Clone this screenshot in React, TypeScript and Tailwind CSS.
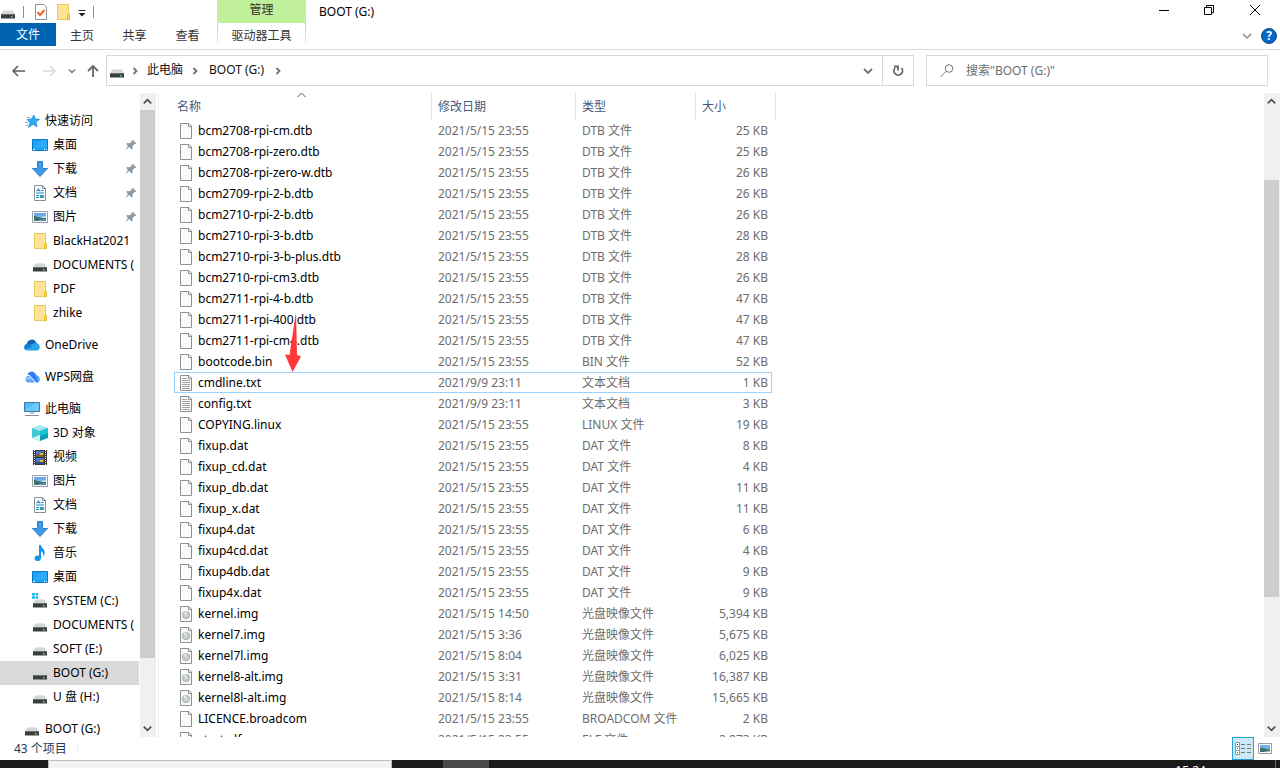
import type { ReactNode } from "react"

type FileKind = "blank" | "text" | "image"
type FileRow = [name: string, date: string, type: string, size: string, kind: FileKind]

const files: FileRow[] = [
  ["bcm2708-rpi-cm.dtb", "2021/5/15 23:55", "DTB 文件", "25 KB", "blank"],
  ["bcm2708-rpi-zero.dtb", "2021/5/15 23:55", "DTB 文件", "25 KB", "blank"],
  ["bcm2708-rpi-zero-w.dtb", "2021/5/15 23:55", "DTB 文件", "26 KB", "blank"],
  ["bcm2709-rpi-2-b.dtb", "2021/5/15 23:55", "DTB 文件", "26 KB", "blank"],
  ["bcm2710-rpi-2-b.dtb", "2021/5/15 23:55", "DTB 文件", "26 KB", "blank"],
  ["bcm2710-rpi-3-b.dtb", "2021/5/15 23:55", "DTB 文件", "28 KB", "blank"],
  ["bcm2710-rpi-3-b-plus.dtb", "2021/5/15 23:55", "DTB 文件", "28 KB", "blank"],
  ["bcm2710-rpi-cm3.dtb", "2021/5/15 23:55", "DTB 文件", "26 KB", "blank"],
  ["bcm2711-rpi-4-b.dtb", "2021/5/15 23:55", "DTB 文件", "47 KB", "blank"],
  ["bcm2711-rpi-400.dtb", "2021/5/15 23:55", "DTB 文件", "47 KB", "blank"],
  ["bcm2711-rpi-cm4.dtb", "2021/5/15 23:55", "DTB 文件", "47 KB", "blank"],
  ["bootcode.bin", "2021/5/15 23:55", "BIN 文件", "52 KB", "blank"],
  ["cmdline.txt", "2021/9/9 23:11", "文本文档", "1 KB", "text"],
  ["config.txt", "2021/9/9 23:11", "文本文档", "3 KB", "text"],
  ["COPYING.linux", "2021/5/15 23:55", "LINUX 文件", "19 KB", "blank"],
  ["fixup.dat", "2021/5/15 23:55", "DAT 文件", "8 KB", "blank"],
  ["fixup_cd.dat", "2021/5/15 23:55", "DAT 文件", "4 KB", "blank"],
  ["fixup_db.dat", "2021/5/15 23:55", "DAT 文件", "11 KB", "blank"],
  ["fixup_x.dat", "2021/5/15 23:55", "DAT 文件", "11 KB", "blank"],
  ["fixup4.dat", "2021/5/15 23:55", "DAT 文件", "6 KB", "blank"],
  ["fixup4cd.dat", "2021/5/15 23:55", "DAT 文件", "4 KB", "blank"],
  ["fixup4db.dat", "2021/5/15 23:55", "DAT 文件", "9 KB", "blank"],
  ["fixup4x.dat", "2021/5/15 23:55", "DAT 文件", "9 KB", "blank"],
  ["kernel.img", "2021/5/15 14:50", "光盘映像文件", "5,394 KB", "image"],
  ["kernel7.img", "2021/5/15 3:36", "光盘映像文件", "5,675 KB", "image"],
  ["kernel7l.img", "2021/5/15 8:04", "光盘映像文件", "6,025 KB", "image"],
  ["kernel8-alt.img", "2021/5/15 3:31", "光盘映像文件", "16,387 KB", "image"],
  ["kernel8l-alt.img", "2021/5/15 8:14", "光盘映像文件", "15,665 KB", "image"],
  ["LICENCE.broadcom", "2021/5/15 23:55", "BROADCOM 文件", "2 KB", "blank"],
  ["start.elf", "2021/5/15 23:55", "ELF 文件", "2,873 KB", "blank"],
]

function Svg({ children, className = "size-4" }: { children: ReactNode; className?: string }) {
  return (
    <svg viewBox="0 0 16 16" className={`shrink-0 ${className}`} fill="none" aria-hidden="true">
      {children}
    </svg>
  )
}

function DriveIcon({ system = false }: { system?: boolean }) {
  return (
    <Svg>
      {system && <path d="M0 0h3v2.500H0zM3.700 0H6v2.500H3.700zM0 3.200h3v2.500H0zM3.700 3.200H6v2.500H3.700z" fill="#19b5f0" />}
      <path d="M3.300 6.500h9.400L15 10.500H1z" fill="#d4d6d8" />
      <path d="M1 10h14v4.500H1z" fill="#3b3d3f" />
      <path d="M1 10h14v1H1z" fill="#6c6f72" />
      <path d="M11 12h1.500v1.500H11z" fill="#4be25c" />
    </Svg>
  )
}

function FolderIcon() {
  return (
    <Svg>
      <path d="M2.500.5h11v11h1v4h-12z" fill="#ffe394" stroke="#ecc95b" />
      <path d="M12.500 11v4.500h2V10z" fill="#ffd766" stroke="#e5b93c" />
    </Svg>
  )
}

function DesktopIcon() {
  return (
    <Svg>
      <path d="M.5 2.500h15v11H.5z" fill="#1ba1f5" stroke="#0877c4" />
      <path d="M1 9 10 3h5v8H1z" fill="#35b1ff" opacity=".5" />
      <path d="M1 12.500h2m9 0h1m1 0h1" stroke="#fff" />
    </Svg>
  )
}

function DownloadIcon() {
  return (
    <Svg>
      <path d="M5.500 .5h5v7h5L8 15.500.5 7.500h5z" fill="#3d9ae8" stroke="#2a7fcf" />
    </Svg>
  )
}

function DocumentIcon() {
  return (
    <Svg>
      <path d="M2.500.5h8l3 3v12h-11z" fill="#fff" stroke="#8b8f92" />
      <path d="M10.500.5v3h3" stroke="#8b8f92" />
      <path d="m4.500 6.500 2-3 1 3M5 5.500h2.500M8.500 5.500h3M4 8h8M4 10.500h3M4 12.500h3" stroke="#2088c9" />
      <path d="M8 10h4v3H8z" fill="#3c9bb0" />
    </Svg>
  )
}

function PictureIcon() {
  return (
    <Svg>
      <path d="M.5 2.500h15v11H.5z" fill="#fff" stroke="#999da0" />
      <path d="M2 4h12v4H2z" fill="#6aa9e8" />
      <path d="M2 7.500 9 8l5-1v2H2z" fill="#c5e2f2" />
      <path d="M2 7c3 0 5 2 12 2v3H2z" fill="#3f7065" />
      <path d="M5 12c3-2 6-2 9-2v2z" fill="#5b8cb8" />
    </Svg>
  )
}

function StarIcon() {
  return (
    <Svg>
      <path d="m10 2 1 4 4.500.3L12 9l1 5-4-2.700L4.500 14.500 6 9.500 3 6.500l4.500-.5z" fill="#2fa9ee" stroke="#1585cf" strokeWidth=".7" />
      <path d="M3 4.500h3M1 9.500h3M2 12.500h2" stroke="#5cbaf0" />
    </Svg>
  )
}

function OneDriveIcon() {
  return (
    <Svg>
      <path d="M3 6a5 5 0 0 1 9-1l1 2-7 4-4-1z" fill="#0a62b5" />
      <path d="M3.500 6.500a4 4 0 0 0-2.300 6.600L9 8.500 5.500 6.400z" fill="#127bd1" />
      <path d="M6 8.500 10.500 6a4 4 0 0 1 5 3c1 2-.5 4.500-2.500 4.500H3.500a3.500 3.500 0 0 1-2.400-1L8 9.500z" fill="#29a3ea" />
    </Svg>
  )
}

function WpsCloudIcon() {
  return (
    <Svg>
      <path d="M3.500 5.500C5 1.500 10 1.500 11.500 5l3.500 7c-.7 1-1.500 1.500-3 1.500L5.500 6.200z" fill="#2f7df5" />
      <path d="M11.500 6c3 0 5 3 4 6l-1.500 1.500z" fill="#55a5fb" />
      <path d="M4.500 7c2 0 3 1.500 5 4.500l1.300 2H4a3.300 3.300 0 0 1 .5-6.500z" fill="#5aa6fc" />
      <path d="m5 6 6.500 7.500M1 10.500c2-2 4-2 6 0" stroke="#fff" strokeWidth=".8" />
    </Svg>
  )
}

function ComputerIcon() {
  return (
    <Svg>
      <path d="M.5 1.500h15v9H.5z" fill="#55bdf5" stroke="#397b9f" />
      <path d="M1 10 11 2h4v8H1z" fill="#7bd2ff" opacity=".6" />
      <path d="M6 12h4M1 14.500h14" stroke="#82939d" />
    </Svg>
  )
}

function CubeIcon() {
  return (
    <Svg>
      <path d="m8 0 8 3-8 3-8-3z" fill="#a9e8ef" />
      <path d="m0 3 8 3v10l-8-3z" fill="#43c6d5" />
      <path d="m16 3-8 3v10l8-3z" fill="#0aa1b8" />
      <path d="m0 13 8-3v6z" fill="#d4f3f5" />
      <path d="m8 6 8-3v5l-8 3z" fill="#17c6d6" />
    </Svg>
  )
}

function VideoIcon() {
  return (
    <Svg>
      <path d="M1 1h14v15H1z" fill="#3a3a3a" />
      <path d="M2.500 1v15M13.500 1v15" stroke="#e9e9e9" strokeDasharray="1 1" />
      <path d="M4 2h8v6H4zM4 9h8v6H4z" fill="#4778d1" />
      <path d="M4 6h3l2-3 3 1v4H4z" fill="#5a6740" />
      <path d="M8 4h3v2H8zM8 11h3v2H8z" fill="#efb62e" />
      <path d="M5 5h2v2H5z" fill="#c63b2d" />
      <path d="M4 13h8v2H4z" fill="#2f4c84" />
    </Svg>
  )
}

function MusicIcon() {
  return (
    <Svg>
      <path d="M7 0h2c.3 3.500 4.800 4.500 3.500 9-.5 1.600-1 2-1.500 2.500.8-3-.2-4.500-2-5.200V13c0 4-6.500 4-6.500.5 0-2.500 2.500-3.500 4.500-2.800z" fill="#1197ec" />
    </Svg>
  )
}

function PinIcon() {
  return (
    <Svg className="size-3">
      <path d="m10 1 5.500 5-2 1-1-.2L10 9.500l.3 3.200-1.500 1.300-3.200-3.200L0 15.500 4 9.300 1.500 6.700 3 5.400l3.200.3 2.800-2.300L8.700 2z" fill="#8f9ca8" />
    </Svg>
  )
}

function FileIcon({ kind }: { kind: FileKind }) {
  return (
    <Svg>
      <path d="M2.500.5h8.500l2.500 2.500v12.500h-11z" fill="#f9faf9" stroke="#8f9191" />
      <path d="M10.500.5v3h3" stroke="#8f9191" />
      {kind === "text" && <path d="M4 3.500h5M4 5.500h8M4 7.500h8M4 9.500h8M4 11.500h8M4 13.500h8" stroke="#a2a4a4" />}
      {kind === "image" && (
        <>
          <circle cx="8" cy="9" r="3.700" fill="#c5cdd0" stroke="#a1a7aa" strokeWidth=".8" />
          <path d="M8 9 5.500 7a4 4 0 0 1 3-2z" fill="#e4eaec" />
          <circle cx="8" cy="9" r="1" fill="#dde3e5" />
        </>
      )}
    </Svg>
  )
}

function Chevron({ dir = "down", className }: { dir?: "down" | "up" | "right"; className?: string }) {
  const d = { down: "m4 6 4 4 4-4", up: "m4 10 4-4 4 4", right: "m6.500 5 3 3-3 3" }[dir]
  return (
    <Svg className={className}>
      <path d={d} stroke="currentColor" strokeWidth="1.800" />
    </Svg>
  )
}

type NavItem = { label: string; icon: ReactNode; root?: boolean; pinned?: boolean; active?: boolean }

const navGroups: NavItem[][] = [
  [
    { label: "快速访问", icon: <StarIcon />, root: true },
    { label: "桌面", icon: <DesktopIcon />, pinned: true },
    { label: "下载", icon: <DownloadIcon />, pinned: true },
    { label: "文档", icon: <DocumentIcon />, pinned: true },
    { label: "图片", icon: <PictureIcon />, pinned: true },
    { label: "BlackHat2021", icon: <FolderIcon /> },
    { label: "DOCUMENTS (", icon: <DriveIcon /> },
    { label: "PDF", icon: <FolderIcon /> },
    { label: "zhike", icon: <FolderIcon /> },
  ],
  [{ label: "OneDrive", icon: <OneDriveIcon />, root: true }],
  [{ label: "WPS网盘", icon: <WpsCloudIcon />, root: true }],
  [
    { label: "此电脑", icon: <ComputerIcon />, root: true },
    { label: "3D 对象", icon: <CubeIcon /> },
    { label: "视频", icon: <VideoIcon /> },
    { label: "图片", icon: <PictureIcon /> },
    { label: "文档", icon: <DocumentIcon /> },
    { label: "下载", icon: <DownloadIcon /> },
    { label: "音乐", icon: <MusicIcon /> },
    { label: "桌面", icon: <DesktopIcon /> },
    { label: "SYSTEM (C:)", icon: <DriveIcon system /> },
    { label: "DOCUMENTS (", icon: <DriveIcon /> },
    { label: "SOFT (E:)", icon: <DriveIcon /> },
    { label: "BOOT (G:)", icon: <DriveIcon />, active: true },
    { label: "U 盘 (H:)", icon: <DriveIcon /> },
  ],
  [{ label: "BOOT (G:)", icon: <DriveIcon />, root: true }],
]

function TitleBar() {
  return (
    <header className="flex h-[23px] shrink-0">
      <div className="flex w-[217px] items-center">
        <DriveIcon />
        <span className="ml-[7px] h-3 w-px bg-[#8d8d8d]" />
        <button className="ml-[9px]" aria-label="属性">
          <Svg>
            <path d="M2.500.5h8.500l2.500 2.500v12.500h-11z" fill="#fff" stroke="#8f9191" />
            <path d="m4.500 8 2.500 3 4.500-5" stroke="#ec6325" strokeWidth="2" />
          </Svg>
        </button>
        <button className="ml-1.5" aria-label="新建文件夹">
          <FolderIcon />
        </button>
        <button className="ml-[3px]" aria-label="自定义快速访问工具栏">
          <Svg>
            <path d="M4.500 6.500h7" stroke="#222" />
            <path d="M4.500 9h7L8 12.500z" fill="#222" />
          </Svg>
        </button>
        <span className="ml-[3px] h-3 w-px bg-[#8d8d8d]" />
      </div>
      <div className="w-[89px] bg-[#c1f09b] text-center leading-5 text-[#333]">管理</div>
      <h1 className="ml-[13px] leading-6">BOOT (G:)</h1>
      <div className="mr-0.5 ml-auto flex">
        <button className="flex w-[46px] justify-center pt-0.5" aria-label="最小化">
          <Svg>
            <path d="M4 8.500h10" stroke="#000" />
          </Svg>
        </button>
        <button className="flex w-[46px] justify-center pt-0.5" aria-label="向下还原">
          <Svg>
            <path d="M3.500 5.500h7v7h-7zM5.500 5.500v-2h7v7h-2" stroke="#000" />
          </Svg>
        </button>
        <button className="flex w-[46px] justify-center pt-0.5" aria-label="关闭">
          <Svg>
            <path d="m3 3 10 10M13 3 3 13" stroke="#000" />
          </Svg>
        </button>
      </div>
    </header>
  )
}

function Ribbon() {
  return (
    <nav className="flex h-[27px] shrink-0 items-start border-b border-[#d9d9d9] text-[#333]">
      <button className="h-[23px] w-14 bg-[#0063b1] pt-px text-white">文件</button>
      <button className="h-6 w-[52px] pt-px">主页</button>
      <button className="h-6 w-[53px] pt-px">共享</button>
      <button className="h-6 w-[53px] pt-px">查看</button>
      <div className="ml-[3px] flex w-[89px] justify-between">
        <span className="h-5 w-px bg-linear-to-b from-[#c8c8c8] to-[#ececec]" />
        <button className="h-6 pt-px">驱动器工具</button>
        <span className="h-5 w-px bg-linear-to-b from-[#c8c8c8] to-[#ececec]" />
      </div>
      <button className="mt-[5px] ml-auto text-[#a0a0a0]" aria-label="展开功能区">
        <Chevron className="size-4" />
      </button>
      <button className="mt-[5px] mr-[3px] ml-1.5" aria-label="帮助">
        <span className="flex size-4 items-center justify-center rounded-full border border-[#174c7c] bg-[#0068c8] font-bold text-white">
          ?
        </span>
      </button>
    </nav>
  )
}

function AddressBar() {
  return (
    <div className="flex h-[43px] shrink-0 items-start pt-[5px] pr-3 text-[#737373]">
      <div className="flex h-8 w-[106px] shrink-0 items-center pl-[11px]">
        <button aria-label="后退">
          <Svg>
            <path d="M14 8H2m5-5L2 8l5 5" stroke="#5d5d5d" strokeWidth="1.500" />
          </Svg>
        </button>
        <button className="ml-3.5" aria-label="前进" disabled>
          <Svg>
            <path d="M2 8h12M9 3l5 5-5 5" stroke="#dadada" strokeWidth="1.500" />
          </Svg>
        </button>
        <button className="ml-[9px]" aria-label="最近浏览的位置">
          <Chevron className="size-3" />
        </button>
        <button className="ml-[7px]" aria-label="向上">
          <Svg>
            <path d="M8 14V3M3 8l5-5 5 5" stroke="#666" strokeWidth="1.800" />
          </Svg>
        </button>
      </div>
      <div className="flex h-[31px] min-w-0 flex-1 items-center border border-[#d9d9d9]">
        <span className="ml-0.5">
          <DriveIcon />
        </span>
        <Chevron dir="right" className="ml-0.5 size-4" />
        <a href="#pc" className="ml-1 pb-px text-[#111]">
          此电脑
        </a>
        <Chevron dir="right" className="ml-1 size-4" />
        <a href="#boot" className="ml-1.5 pb-px text-[#111]">
          BOOT (G:)
        </a>
        <Chevron dir="right" className="ml-1.5 size-4" />
        <button className="mr-1.5 ml-auto" aria-label="以前的位置">
          <Chevron className="size-4" />
        </button>
        <button className="flex h-full w-[31px] items-center justify-center border-l border-[#d9d9d9]" aria-label="刷新">
          <Svg>
            <path d="M5 5a4.300 4.300 0 1 0 6.500 0M4 3.500h4V7.500" stroke="#666" strokeWidth="1.800" />
          </Svg>
        </button>
      </div>
      <label className="ml-3 flex h-[31px] w-[342px] items-center border border-[#d9d9d9] pl-3">
        <Svg>
          <circle cx="10" cy="5.500" r="3.800" stroke="#777" />
          <path d="M7 8.500 1.500 14" stroke="#777" />
        </Svg>
        <input
          aria-label="搜索"
          placeholder={'搜索"BOOT (G:)"'}
          className="ml-[11px] min-w-0 flex-1 bg-transparent outline-none placeholder:text-[#6d6d6d]"
        />
      </label>
    </div>
  )
}

function ScrollBar({ before, thumb, after }: { before: string; thumb: string; after: string }) {
  return (
    <div className="flex w-4 shrink-0 flex-col bg-[#f0f0f0] text-[#505050]">
      <button className="flex h-[17px] w-[15px] shrink-0 items-center justify-center" aria-label="向上滚动">
        <Chevron dir="up" className="size-[15px]" />
      </button>
      <div className={before} />
      <div className={`w-[15px] bg-[#cdcdcd] ${thumb}`} />
      <div className={after} />
      <button className="flex h-[17px] w-[15px] shrink-0 items-center justify-center" aria-label="向下滚动">
        <Chevron className="size-[15px]" />
      </button>
    </div>
  )
}

function Sidebar() {
  return (
    <aside className="flex w-[159px] shrink-0 border-r border-[#f0f0f0]">
      <nav className="flex w-[140px] flex-col gap-2 overflow-hidden pt-4 pr-px">
        {navGroups.map((group, i) => (
          <ul key={i}>
            {group.map((item, j) => (
              <li key={j}>
                <a
                  href="#"
                  className={`flex h-6 items-center gap-[5px] whitespace-nowrap ${item.root ? "pl-6" : "pl-8"} ${item.active ? "bg-[#d9d9d9]" : ""}`}
                >
                  {item.icon}
                  <span className="flex-1">{item.label}</span>
                  {item.pinned && (
                    <span className="mr-0.5">
                      <PinIcon />
                    </span>
                  )}
                </a>
              </li>
            ))}
          </ul>
        ))}
      </nav>
      <ScrollBar before="grow-0" thumb="grow-[548]" after="grow-[62]" />
    </aside>
  )
}

function FileTable() {
  return (
    <section className="relative min-w-0 flex-1 overflow-hidden pl-[15px]">
      <table className="w-[602px] table-fixed border-separate border-spacing-0">
        <colgroup>
          <col className="w-[258px]" />
          <col className="w-36" />
          <col className="w-[120px]" />
          <col className="w-[76px]" />
          <col className="w-1" />
        </colgroup>
        <thead>
          <tr className="h-[27px] text-left text-[#44597a] *:border-r *:border-[#e5e5e5] *:p-0 *:font-normal">
            <th>
              <span className="relative block pl-[3px]">
                名称
                <span className="absolute -top-2 left-[121px] text-[#555]">
                  <svg viewBox="0 0 12 12" className="size-3" fill="none" aria-hidden="true">
                    <path d="m2.500 6 4-4 4 4" stroke="currentColor" />
                  </svg>
                </span>
              </span>
            </th>
            <th>
              <span className="pl-1.5">修改日期</span>
            </th>
            <th>
              <span className="pl-1.5">类型</span>
            </th>
            <th colSpan={2}>
              <span className="pl-1.5">大小</span>
            </th>
          </tr>
        </thead>
        <tbody>
          {files.map(([name, date, type, size, kind]) => {
            const edge = name === "cmdline.txt" ? "border-[#99d1ff]" : "border-transparent"
            return (
              <tr key={name} className="h-[21px] text-[#6d6d6d]">
                <td className={`border-y border-l p-0 ${edge}`}>
                  <div className="flex items-center gap-1 pl-[3px] text-black">
                    <FileIcon kind={kind} />
                    {name}
                  </div>
                </td>
                <td className={`border-y p-0 pl-1.5 ${edge}`}>{date}</td>
                <td className={`border-y p-0 pl-1.5 ${edge}`}>{type}</td>
                <td className={`border-y border-r p-0 pr-[3px] text-right ${edge}`}>{size}</td>
                <td className="p-0" />
              </tr>
            )
          })}
        </tbody>
      </table>
      {/* Hand-drawn arrow pointing at cmdline.txt */}
      <svg viewBox="0 0 16 60" className="absolute top-[219px] left-[126px] h-[60px] w-4" aria-hidden="true">
        <path d="M11 0 12 43l4 1.500L7.500 60 0 42.500l4.500.5z" fill="#ff3838" />
      </svg>
    </section>
  )
}

function StatusBar() {
  return (
    <footer className="flex h-[23px] shrink-0 items-center pl-3.5 text-[#1e395b]">
      <span>43 个项目</span>
      <span className="ml-2.5 h-3 w-px bg-[#f0f0f0]" />
      <button className="ml-auto flex h-[23px] w-[22px] items-center justify-center border border-[#26a0da] bg-[#cbe8f6]" aria-label="详细信息">
        <svg viewBox="0 0 16 14" className="h-3.5 w-4" fill="none" aria-hidden="true">
          <path d="M.5.5h4v4h-4zM.5 4.500h4v4h-4zM.5 8.500h4v4h-4z" fill="#fff" stroke="#999" />
          <path d="M6 2.500h4m2 0h4M6 6.500h4m2 0h4M6 10.500h4m2 0h4" stroke="#777" />
          <path d="M2 2h1v1H2z" fill="#444" />
          <path d="M2 6h1v1H2z" fill="#2889df" />
          <path d="M2 10h1v1H2z" fill="#dc2020" />
        </svg>
      </button>
      <button className="mr-2 ml-1" aria-label="大缩略图">
        <svg viewBox="0 0 14 12" className="h-3 w-3.5" fill="none" aria-hidden="true">
          <path d="M.5.5h13v10H.5z" fill="#fff" stroke="#999da0" />
          <path d="M2 2h10v4H2z" fill="#74b0f0" />
          <path d="M2 5c3-1 6 2 10 1v3H2z" fill="#3f7065" />
          <path d="M6 9c2-1 4-1 6-1v1z" fill="#9cc4e4" />
        </svg>
      </button>
    </footer>
  )
}

function TaskBar() {
  return (
    <div className="flex h-2 shrink-0 overflow-hidden bg-[#1b1b1b] text-white">
      <div className="ml-12 w-[344px] border border-b-0 border-[#bcbcbc] bg-[#f2f2f2]" />
      <div className="ml-[51px] w-[46px] bg-[#484848]" />
      <time className="mt-[3px] mr-[69px] ml-auto leading-4">15:24</time>
      <div className="mr-1 w-px bg-[#6b6b6b]" />
    </div>
  )
}

export default function App() {
  return (
    <div className="flex h-screen flex-col overflow-hidden bg-white font-['Noto_Sans','Noto_Sans_CJK_SC',sans-serif] text-[12px] leading-4 text-black">
      <TitleBar />
      <Ribbon />
      <AddressBar />
      <main className="flex min-h-0 flex-1">
        <Sidebar />
        <FileTable />
        <ScrollBar before="grow-[70]" thumb="grow-[417]" after="grow-[123]" />
      </main>
      <StatusBar />
      <TaskBar />
    </div>
  )
}
